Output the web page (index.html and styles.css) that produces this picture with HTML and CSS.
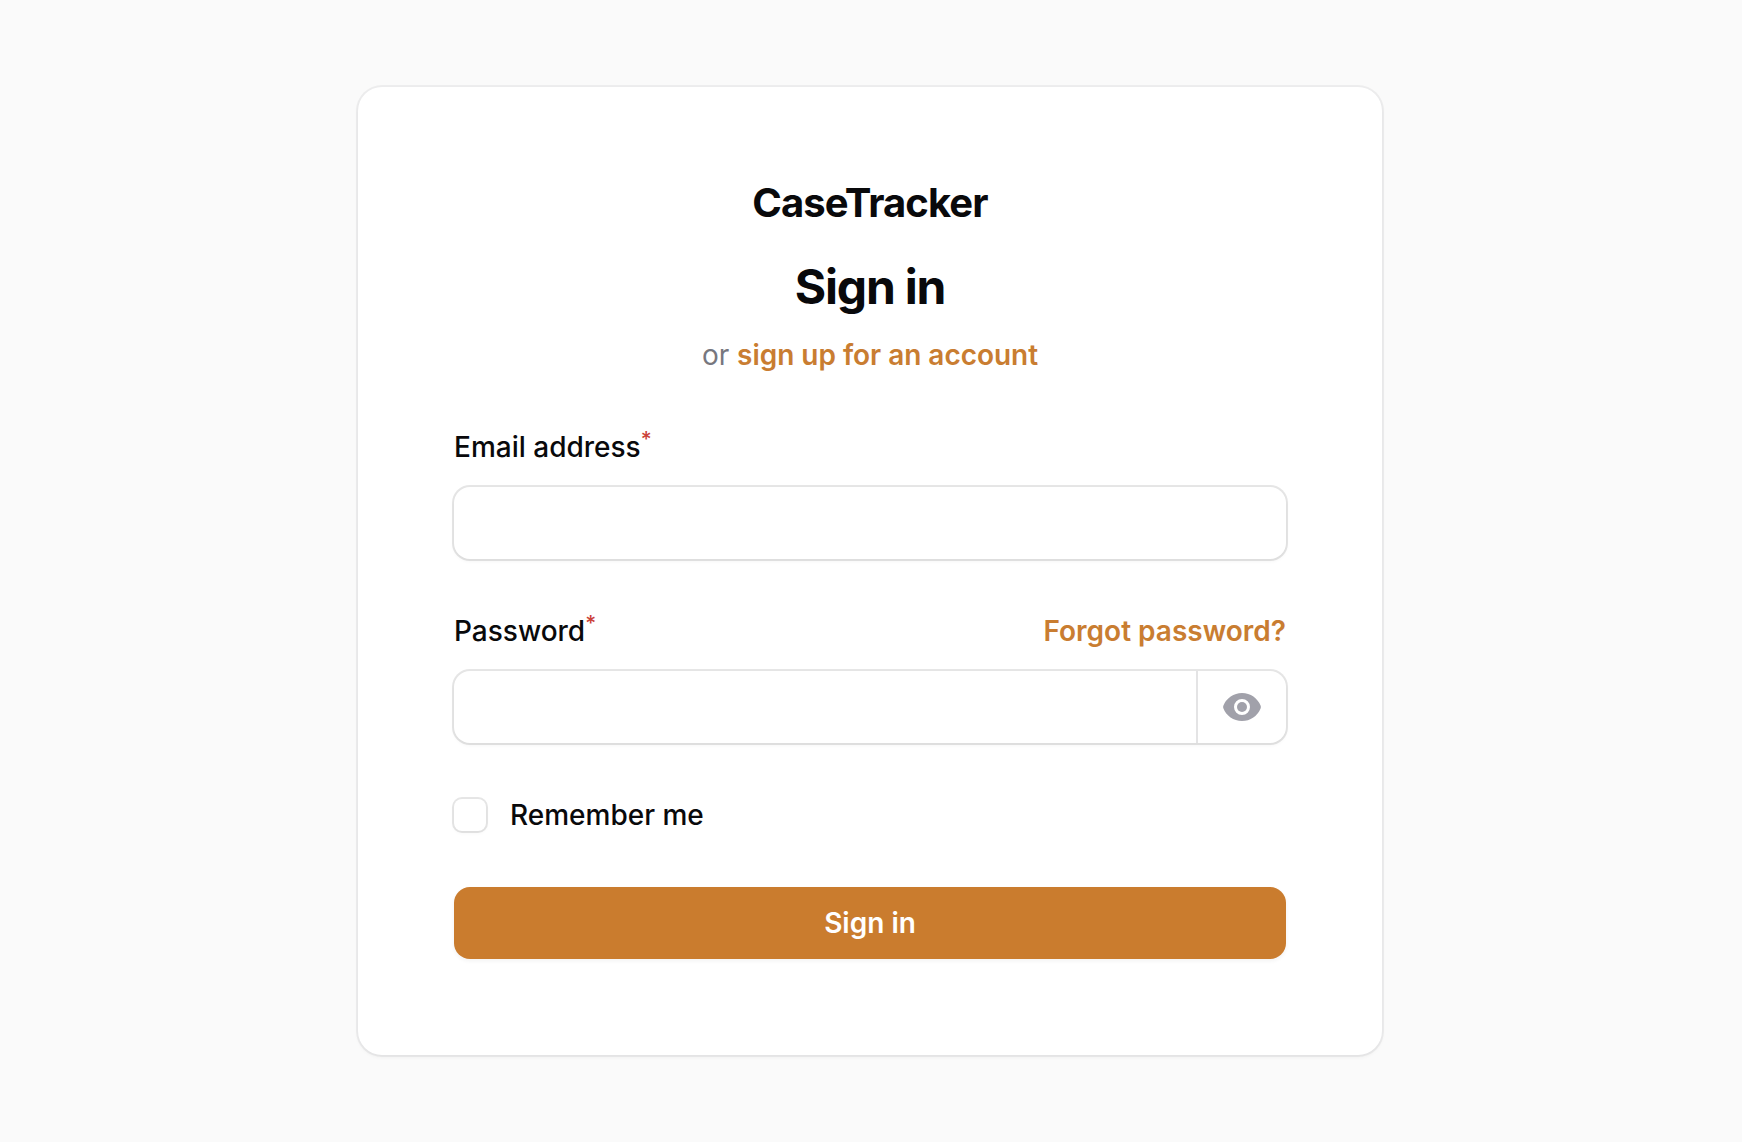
FILE: index.html
```html
<!DOCTYPE html>
<html lang="en">
<head>
<meta charset="utf-8">
<title>Sign in - CaseTracker</title>
<link rel="stylesheet" href="styles.css">
</head>
<body>
<main class="card">
  <header class="header">
    <div class="logo">CaseTracker</div>
    <h1 class="heading">Sign in</h1>
    <p class="subheading">or <a class="link" href="#">sign up for an account</a></p>
  </header>
  <form class="form">
    <div class="field">
      <div class="label-row">
        <label class="label" for="email">Email address<sup class="required">*</sup></label>
      </div>
      <div class="input-wrap"><input class="input" id="email" type="email"></div>
    </div>
    <div class="field">
      <div class="label-row">
        <label class="label" for="password">Password<sup class="required">*</sup></label>
        <a class="link" href="#">Forgot password?</a>
      </div>
      <div class="input-wrap">
        <input class="input" id="password" type="password">
        <button class="reveal" type="button" aria-label="Show password">
          <svg class="eye" viewBox="0 0 20 20" fill="currentColor" aria-hidden="true">
            <path d="M10 12.5a2.5 2.5 0 1 0 0-5 2.5 2.5 0 0 0 0 5Z"/>
            <path fill-rule="evenodd" clip-rule="evenodd" d="M.664 10.59a1.651 1.651 0 0 1 0-1.186A10.004 10.004 0 0 1 10 3c4.257 0 7.893 2.66 9.336 6.41.147.381.146.804 0 1.186A10.004 10.004 0 0 1 10 17c-4.257 0-7.893-2.66-9.336-6.41ZM14 10a4 4 0 1 1-8 0 4 4 0 0 1 8 0Z"/>
          </svg>
        </button>
      </div>
    </div>
    <label class="remember">
      <input class="checkbox" type="checkbox">
      <span class="label">Remember me</span>
    </label>
    <button class="submit" type="submit">Sign in</button>
  </form>
</main>
</body>
</html>
```
FILE: styles.css
```css
*, *::before, *::after {
  box-sizing: border-box;
}

body {
  margin: 0;
  padding-right: 2px;
  min-height: 100vh;
  display: flex;
  align-items: center;
  justify-content: center;
  background: #fafafa;
  color: #09090b;
  font-family: Inter, "Liberation Sans", sans-serif;
  font-size: 28px;
  line-height: 40px;
  -webkit-font-smoothing: antialiased;
}

.card {
  width: 1024px;
  padding: 96px;
  border-radius: 24px;
  background: #fff;
  box-shadow: 0 0 0 2px rgba(9, 9, 11, 0.05), 0 2px 4px 0 rgba(0, 0, 0, 0.05);
}

.header {
  display: flex;
  flex-direction: column;
  align-items: center;
  margin-bottom: 48px;
}

.logo {
  margin-bottom: 32px;
  font-size: 40px;
  line-height: 40px;
  font-weight: 700;
  letter-spacing: -0.9px;
}

.heading {
  margin: 0;
  font-size: 48px;
  line-height: 64px;
  font-weight: 700;
  letter-spacing: -0.025em;
}

.subheading {
  margin: 16px 0 0;
  color: #77777f;
  letter-spacing: -0.03px;
}

.link {
  color: #c97d31;
  font-weight: 600;
  text-decoration: none;
}

.form {
  display: flex;
  flex-direction: column;
  gap: 48px;
}

.field {
  display: flex;
  flex-direction: column;
  gap: 16px;
}

.label-row {
  display: flex;
  align-items: center;
  justify-content: space-between;
  height: 48px;
}

.label {
  font-weight: 500;
  line-height: 48px;
}

.required {
  position: relative;
  top: -0.5em;
  vertical-align: baseline;
  font-size: 75%;
  line-height: 0;
  color: #cb4239;
}

.input-wrap {
  display: flex;
  height: 72px;
  border-radius: 16px;
  background: #fff;
  box-shadow: 0 0 0 2px rgba(9, 9, 11, 0.1), 0 2px 4px 0 rgba(0, 0, 0, 0.05);
}

.input {
  flex: 1;
  min-width: 0;
  padding: 12px 24px;
  border: 0;
  outline: 0;
  background: transparent;
  font: inherit;
}

.reveal {
  display: flex;
  align-items: center;
  padding: 0 24px;
  border: 0;
  border-left: 2px solid #e4e4e5;
  background: transparent;
  color: #a1a1aa;
}

.eye {
  width: 40px;
  height: 40px;
}

.remember {
  display: flex;
  align-items: center;
  gap: 24px;
}

.checkbox {
  appearance: none;
  width: 32px;
  height: 32px;
  margin: 0;
  border-radius: 8px;
  background: #fff;
  box-shadow: 0 0 0 2px rgba(9, 9, 11, 0.1), 0 2px 4px 0 rgba(0, 0, 0, 0.04);
}

.submit {
  height: 72px;
  padding: 0;
  border: 0;
  border-radius: 16px;
  background: #ca7c2e;
  color: #fff;
  font: inherit;
  font-weight: 600;
  box-shadow: 0 2px 4px 0 rgba(0, 0, 0, 0.05);
}
```
